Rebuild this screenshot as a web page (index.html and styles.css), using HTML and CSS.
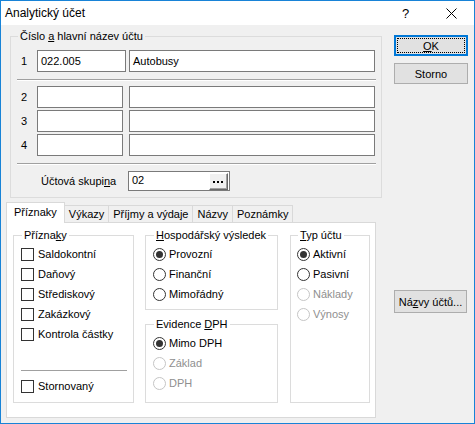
FILE: index.html
```html
<!DOCTYPE html>
<html lang="cs">
<head>
<meta charset="utf-8">
<title>Analytický účet</title>
<link rel="stylesheet" href="styles.css">
</head>
<body>
<div class="window">
  <div class="titlebar">
    <span class="title">Analytický účet</span>
    <span class="tb-btn help">?</span>
    <span class="tb-btn close"><svg width="11" height="11" viewBox="0 0 11 11"><path d="M0.5 0.5L10.5 10.5M10.5 0.5L0.5 10.5" stroke="#000" stroke-width="1" fill="none"/></svg></span>
  </div>
  <div class="client">
    <div class="main">
      <fieldset class="group name-group">
        <legend>Číslo <u>a</u> hlavní název účtu</legend>
        <div class="row"><span class="num">1</span><div class="input code first">022.005</div><div class="input name">Autobusy</div></div>
        <div class="sep"></div>
        <div class="rows">
          <div class="row"><span class="num">2</span><div class="input code"></div><div class="input name"></div></div>
          <div class="row"><span class="num">3</span><div class="input code"></div><div class="input name"></div></div>
          <div class="row"><span class="num">4</span><div class="input code"></div><div class="input name"></div></div>
        </div>
        <div class="sep"></div>
        <div class="picker-row">
          <span class="lbl">Účtová skupi<u>n</u>a</span>
          <div class="input picker"><span>02</span><span class="dots"><svg width="11" height="3" viewBox="0 0 11 3"><rect x="0" y="0" width="2" height="2" fill="#000"/><rect x="4" y="0" width="2" height="2" fill="#000"/><rect x="8" y="0" width="2" height="2" fill="#000"/></svg></span></div>
        </div>
      </fieldset>

      <div class="tabs">
        <span class="tab active">Příznaky</span>
        <span class="tab">Výkazy</span>
        <span class="tab">Příjmy a výdaje</span>
        <span class="tab">Názvy</span>
        <span class="tab">Poznámky</span>
      </div>
      <div class="panel">
        <fieldset class="group flags">
          <legend>Přízna<u>k</u>y</legend>
          <div class="opt"><span class="check"></span>Saldokontní</div>
          <div class="opt"><span class="check"></span>Daňový</div>
          <div class="opt"><span class="check"></span>Střediskový</div>
          <div class="opt"><span class="check"></span>Zakázkový</div>
          <div class="opt"><span class="check"></span>Kontrola částky</div>
          <div class="flag-sep"></div>
          <div class="opt"><span class="check"></span>Stornovaný</div>
        </fieldset>
        <div class="mid">
          <fieldset class="group hosp">
            <legend><u>H</u>ospodářský výsledek</legend>
            <div class="opt"><span class="radio on"></span>Provozní</div>
            <div class="opt"><span class="radio"></span>Finanční</div>
            <div class="opt"><span class="radio"></span>Mimořádný</div>
          </fieldset>
          <fieldset class="group dph">
            <legend>Evidence <u>D</u>PH</legend>
            <div class="opt"><span class="radio on"></span>Mimo DPH</div>
            <div class="opt disabled"><span class="radio"></span>Základ</div>
            <div class="opt disabled"><span class="radio"></span>DPH</div>
          </fieldset>
        </div>
        <fieldset class="group typ">
          <legend><u>T</u>yp účtu</legend>
          <div class="opt"><span class="radio on"></span>Aktivní</div>
          <div class="opt"><span class="radio"></span>Pasivní</div>
          <div class="opt disabled"><span class="radio"></span>Náklady</div>
          <div class="opt disabled"><span class="radio"></span>Výnosy</div>
        </fieldset>
      </div>
    </div>
    <div class="buttons">
      <div class="btn ok"><span><u>O</u>K</span></div>
      <div class="btn storno">Storno</div>
      <div class="btn names">Ná<u>z</u>vy účtů...</div>
    </div>
  </div>
</div>
</body>
</html>
```

FILE: styles.css
```css
* { box-sizing: border-box; }

body {
  margin: 0;
  font-family: "Liberation Sans", Arial, sans-serif;
  font-size: 11px;
  color: #000;
  background: #fff;
}

.window {
  width: 475px;
  height: 424px;
  border: 1px solid #1883d7;
  display: flex;
  flex-direction: column;
  background: #f0f0f0;
}

.titlebar {
  height: 24px;
  background: #fff;
  display: flex;
  align-items: center;
}

.title {
  flex: 1;
  padding-left: 4px;
  font-size: 12px;
}

.tb-btn {
  width: 45px;
  height: 24px;
  display: flex;
  align-items: center;
  justify-content: center;
}

.help { font-size: 13px; }
.close { width: 46px; }

.client {
  flex: 1;
  display: flex;
  padding-left: 5px;
}

.main {
  width: 376px;
  display: flex;
  flex-direction: column;
}

.group {
  margin: 0;
  min-width: 0;
  border: 1px solid #dcdcdc;
}

.group legend {
  padding: 0 2px;
  margin-left: 1px;
  line-height: 13px;
}

.name-group {
  margin: 5px 0 0 4px;
  width: 372px;
  padding: 7px 5px 6px 6px;
}

.row {
  display: flex;
  height: 22px;
}

.rows {
  display: flex;
  flex-direction: column;
  gap: 2px;
}

.num {
  width: 20px;
  padding-left: 4px;
  display: flex;
  align-items: center;
}

.input {
  background: #fff;
  border: 1px solid #7a7a7a;
  display: flex;
  align-items: center;
  padding-left: 3px;
}

.code { width: 86px; }
.code.first { width: 89px; }
.name { width: 246px; margin-left: auto; margin-right: 1px; }

.sep {
  height: 2px;
  border-top: 1px solid #a0a0a0;
  border-bottom: 1px solid #fff;
  margin: 7px 0 5px;
}
.rows + .sep { margin-bottom: 6px; }

.picker-row {
  display: flex;
  align-items: center;
  height: 20px;
}

.lbl {
  width: 111px;
  padding-left: 24px;
}

.picker {
  width: 102px;
  height: 20px;
  justify-content: space-between;
  align-items: flex-start;
  padding-top: 2px;
}

.dots {
  width: 19px;
  height: 17px;
  margin: -1px 1px 0 0;
  background: #f0f0f0;
  border-top: 1px solid #fff;
  border-left: 1px solid #fff;
  border-right: 1px solid #696969;
  border-bottom: 1px solid #696969;
  box-shadow: inset -1px -1px 0 #a0a0a0;
  display: flex;
  align-items: center;
  justify-content: center;
  padding-top: 2px;
}

.tabs {
  display: flex;
  align-items: flex-end;
  height: 20px;
  margin-top: 4px;
}

.tab {
  height: 17px;
  padding: 0 4px;
  border: 1px solid #d9d9d9;
  border-bottom: none;
  margin-left: -1px;
  background: #f0f0f0;
  display: flex;
  align-items: center;
}

.tab.active {
  height: 21px;
  margin-left: 0;
  margin-bottom: -1px;
  padding: 0 7px 2px;
  background: #fff;
  position: relative;
  z-index: 1;
}

.panel {
  flex: 1;
  margin-bottom: 5px;
  width: 370px;
  background: #fff;
  border: 1px solid #d9d9d9;
  padding: 6px 0 14px 6px;
  display: flex;
}

.flags {
  width: 121px;
  padding: 2px 0 0 7px;
  margin-right: 11px;
}

.mid {
  width: 133px;
  margin-right: 12px;
  display: flex;
  flex-direction: column;
}

.hosp {
  padding: 2px 0 5px 7px;
}

.dph {
  flex: 1;
  margin-top: 8px;
  padding: 2px 0 0 7px;
}

.typ {
  width: 80px;
  padding: 2px 0 0 6px;
}

.opt {
  height: 20px;
  display: flex;
  align-items: center;
}

.opt.disabled { color: #8f8f8f; }

.check {
  width: 13px;
  height: 13px;
  border: 1px solid #333;
  background: #fff;
  margin-right: 4px;
}

.flag-sep {
  width: 106px;
  height: 2px;
  border-top: 1px solid #a0a0a0;
  border-bottom: 1px solid #fff;
  margin: 26px 0 4px;
}

.radio {
  width: 13px;
  height: 13px;
  border-radius: 50%;
  border: 1px solid #333;
  background: #fff;
  margin-right: 3px;
  display: flex;
  align-items: center;
  justify-content: center;
}

.radio.on::after {
  content: "";
  width: 7px;
  height: 7px;
  border-radius: 50%;
  background: #333;
}

.disabled .radio { border-color: #c5c5c5; }

.buttons {
  margin-left: 12px;
  padding-top: 10px;
  display: flex;
  flex-direction: column;
}

.btn {
  width: 74px;
  height: 21px;
  background: #e1e1e1;
  border: 1px solid #adadad;
  display: flex;
  align-items: center;
  justify-content: center;
}

.btn.ok {
  border: 2px solid #0078d7;
  outline: 1px dotted #000;
  outline-offset: -4px;
}

.btn.storno { margin-top: 7px; }

.btn.names {
  width: 73px;
  height: 23px;
  margin-top: 206px;
}
```
